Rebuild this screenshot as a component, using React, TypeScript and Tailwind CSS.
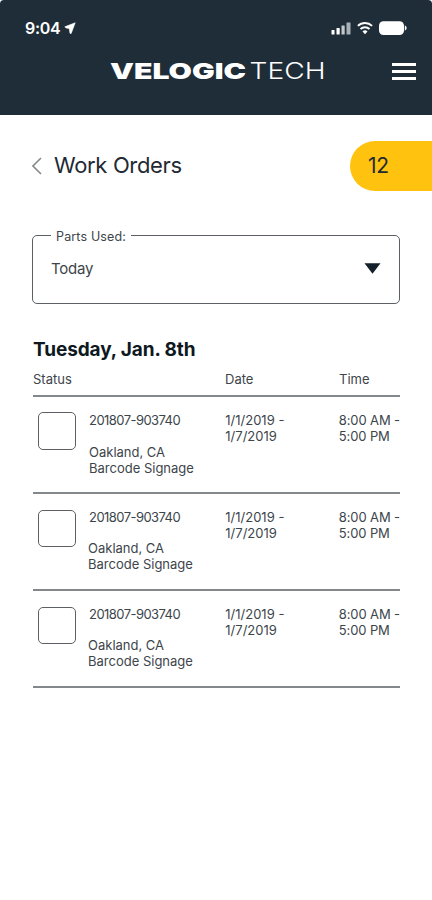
import { useState } from 'react';

const orders = [
  { id: 1, number: '201807-903740', city: 'Oakland, CA', type: 'Barcode Signage' },
  { id: 2, number: '201807-903740', city: 'Oakland, CA', type: 'Barcode Signage' },
  { id: 3, number: '201807-903740', city: 'Oakland, CA', type: 'Barcode Signage' },
];

const StatusBar = () => (
  <div className="flex items-center justify-between pt-[18px] pl-[25px] pr-[25px] h-[38px]">
    <div className="flex items-center gap-[4px]">
      <span className="text-[16px] leading-5 font-semibold tracking-[-0.3px]">9:04</span>
      <svg width="12" height="13" viewBox="0 0 12 13" fill="#fff" stroke="#fff" strokeWidth="0.6" strokeLinejoin="round">
        <path d="M11.2 0.8 L0.8 4.8 L2 6 L5.2 6.4 L6 11.4 L7.2 11.4 Z" />
      </svg>
    </div>
    <div className="flex items-center gap-[6px]">
      <svg width="20" height="14" viewBox="0 0 20 14">
        <rect x="0.5" y="9" width="3" height="4.5" rx="0.5" fill="#fff" />
        <rect x="5.5" y="7" width="3.2" height="6.5" rx="0.5" fill="#fff" />
        <rect x="10.5" y="4.5" width="3.2" height="9" rx="0.5" fill="#c3c8cb" />
        <rect x="15.5" y="1.5" width="4" height="12" rx="0.5" fill="#aab1b6" />
      </svg>
      <svg width="16" height="14" viewBox="0 0 16 14" fill="none" stroke="#fff">
        <path d="M0.9 4.9 A10.3 10.3 0 0 1 15.1 4.9" strokeWidth="2" />
        <path d="M3.5 8 A6.5 6.5 0 0 1 12.5 8" strokeWidth="1.9" />
        <path d="M5.5 10.5 A3.6 3.6 0 0 1 10.5 10.5 L8 13.2 Z" fill="#fff" stroke="none" />
      </svg>
      <svg width="28" height="14" viewBox="0 0 28 14" fill="#fff">
        <rect x="0" y="0.2" width="25" height="13.8" rx="4.4" />
        <path d="M25.8 4.3 Q29.6 7 25.8 9.8 Z" />
      </svg>
    </div>
  </div>
);

const Logo = () => (
  <svg width="216" height="30" viewBox="0 0 216 30" className="fill-white">
    <text x="0" y="23" fontSize="22" fontWeight="900" textLength="136" lengthAdjust="spacingAndGlyphs">
      VELOGIC
    </text>
    <text x="139.5" y="23" fontSize="22.5" fontWeight="300" textLength="76" lengthAdjust="spacingAndGlyphs">
      TECH
    </text>
  </svg>
);

const Header = () => (
  <header className="h-[115px] bg-[#1f2d38] text-white rounded-t-[4px]">
    <StatusBar />
    <div className="flex items-center justify-between pt-[18px] pl-[110px] pr-4">
      <Logo />
      <button aria-label="Menu" className="flex flex-col gap-1">
        <span className="block w-6 h-[3px] bg-white" />
        <span className="block w-6 h-[3px] bg-white" />
        <span className="block w-6 h-[3px] bg-white" />
      </button>
    </div>
  </header>
);

const OrderRow = ({ order }: { order: (typeof orders)[number] }) => {
  const [checked, setChecked] = useState(false);

  return (
    <div className="flex h-[97px] border-b-2 border-[#85888b] pt-[15px] pl-[5px]">
      <button
        role="checkbox"
        aria-checked={checked}
        aria-label="Completed"
        onClick={() => setChecked(!checked)}
        className={
          order.id === 1
            ? 'shrink-0 w-[38px] h-[38px] border border-[#5c6064] rounded-[5px]'
            : 'shrink-0 w-[38px] h-[37px] mt-px border border-[#5c6064] rounded-[5px]'
        }
      />
      <div className="w-[137px] ml-[13px]">
        <p className="tracking-[-0.55px]">{order.number}</p>
        <div className={order.id === 1 ? 'mt-4' : 'mt-[15px] -ml-px'}>
          <p>{order.city}</p>
          <p>{order.type}</p>
        </div>
      </div>
      <p className="w-[114px]">
        1/1/2019 -<br />1/7/2019
      </p>
      <p className="whitespace-nowrap tracking-[-0.1px]">
        8:00 AM -<br />5:00 PM
      </p>
    </div>
  );
};

const App = () => {
  return (
    <div className="w-[432px] h-[900px] overflow-hidden bg-white font-['Inter',sans-serif] text-[#1f2a33]">
      <Header />

      {/* Page title and order count */}
      <div className="flex items-center h-[50px] mt-[26px] pl-8">
        <svg width="10" height="18" viewBox="0 0 10 18" fill="none" stroke="#85898c" strokeWidth="1.6">
          <path d="M9 1 L1 9 L9 17" />
        </svg>
        <h1 className="ml-3 text-[22px] leading-7 tracking-[-0.35px] pb-[3px]">Work Orders</h1>
        <div className="flex items-center w-[82px] h-[50px] ml-auto pl-[18px] rounded-l-full bg-[#ffc20e] text-[21px] tracking-[-0.3px]">
          12
        </div>
      </div>

      <main className="px-[33px]">
        {/* Filter */}
        <fieldset className="h-[75px] mt-[38px] -mx-px w-[368px] border border-[#5c6064] rounded-[5px] pl-[18px] pr-[18px]">
          <legend className="px-[5px] pt-[3px] text-[12.5px] leading-[9px] tracking-[0.15px] text-[#3d454b]">
            Parts Used:
          </legend>
          <div className="flex items-center justify-between mt-[18px]">
            <span className="text-[15px] leading-5 tracking-[-0.2px] text-[#3d454b]">Today</span>
            <svg width="17" height="11" viewBox="0 0 17 11" fill="#14202b" className="-mt-[2px]">
              <path d="M0.5 0.3 H16.5 L8.5 10.7 Z" />
            </svg>
          </div>
        </fieldset>

        {/* Orders */}
        <h2 className="mt-[34px] text-[19px] leading-6 font-bold tracking-[-0.1px] text-[#0e1820]">
          Tuesday, Jan. 8th
        </h2>
        <div className="w-[367px] text-[13px] leading-4 text-[#3d454b]">
          <div className="flex h-[35px] pt-[9px] border-b-2 border-[#85888b]">
            <span className="w-[192px]">Status</span>
            <span className="w-[114px]">Date</span>
            <span>Time</span>
          </div>
          {orders.map((order) => (
            <OrderRow key={order.id} order={order} />
          ))}
        </div>
      </main>
    </div>
  );
};

export default App;
